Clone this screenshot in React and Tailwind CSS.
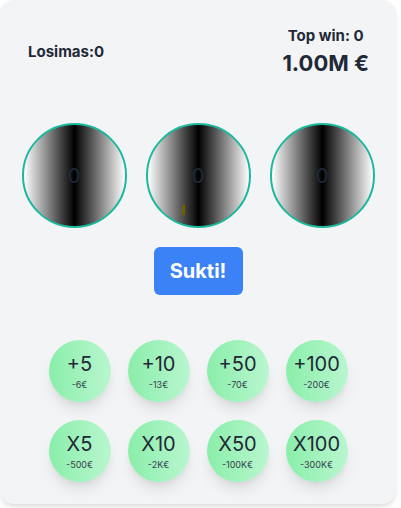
import React, { useState } from 'react';

const BETS = [
    { label: '+5', cost: '-6€' },
    { label: '+10', cost: '-13€' },
    { label: '+50', cost: '-70€' },
    { label: '+100', cost: '-200€' },
    { label: 'X5', cost: '-500€' },
    { label: 'X10', cost: '-2K€' },
    { label: 'X50', cost: '-100K€' },
    { label: 'X100', cost: '-300K€' },
];

export default function App() {
    const [spins] = useState(0);
    const [reels] = useState([0, 0, 0]);

    return (
        <div className="bg-white min-h-screen font-['Inter',sans-serif] text-[#1f2937]">
            <div className="w-[396px] h-[504px] bg-[#f3f4f6] rounded-[14px] shadow-md flex flex-col">
                {/* Header */}
                <div className="flex items-center justify-between pl-7 pr-[27px] pt-[26px]">
                    <div className="text-[15px] leading-5 font-bold">Losimas:{spins}</div>
                    <div className="text-center font-bold">
                        <div className="text-[15px] leading-5">Top win: 0</div>
                        <div className="text-[22px] leading-7 mt-[3px]">1.00M €</div>
                    </div>
                </div>

                {/* Reels */}
                <div className="flex justify-center gap-[19px] mt-[46px]">
                    {reels.map((r, i) => (
                        <div
                            key={i}
                            className="relative w-[105px] h-[105px] rounded-full border-2 border-[#1cb89e] bg-[linear-gradient(to_right,#ffffff_0%,#000000_50%,#ffffff_100%)] flex items-center justify-center"
                        >
                            <span className="text-xl text-[#1e293b]">{r}</span>
                            {i === 1 && (
                                <span className="absolute left-[34px] top-[80px] w-[3px] h-[10px] bg-[#6e6200]" />
                            )}
                        </div>
                    ))}
                </div>

                {/* Spin */}
                <div className="flex justify-center mt-[19px]">
                    <button className="w-[89px] h-[48px] bg-[#3b82f6] text-white text-xl font-bold rounded-md">
                        Sukti!
                    </button>
                </div>

                {/* Bets */}
                <div className="grid grid-cols-4 gap-x-[17px] gap-y-[18px] w-fit mx-auto mt-[45px]">
                    {BETS.map((b) => (
                        <button
                            key={b.label}
                            className="w-[62px] h-[62px] rounded-full bg-[linear-gradient(to_right,#8aeeaa,#b9f6cf)] shadow-lg flex flex-col items-center justify-center"
                        >
                            <span className="text-xl leading-6 text-[#1f2937]">{b.label}</span>
                            <span className="text-[9px] leading-3 mt-[3px] text-[#374151]">{b.cost}</span>
                        </button>
                    ))}
                </div>
            </div>
        </div>
    );
}
